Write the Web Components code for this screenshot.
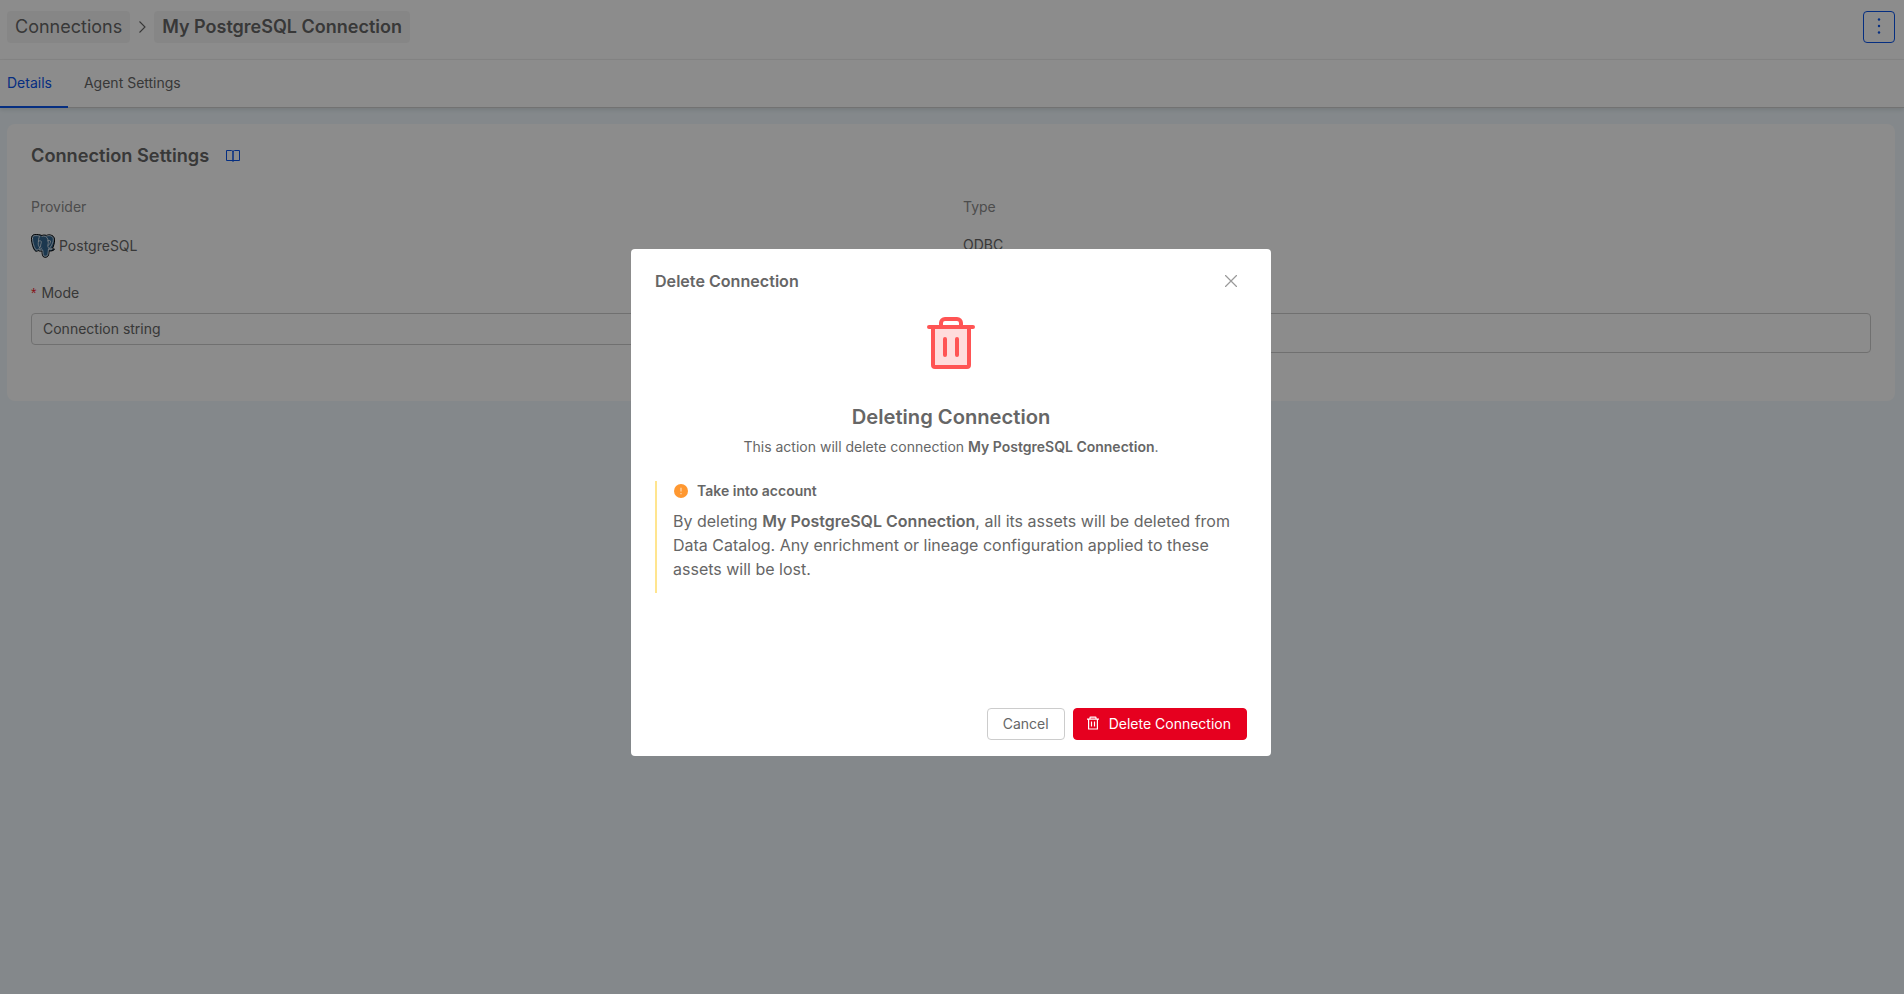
<!DOCTYPE html>
<html lang="en">
<head>
<meta charset="utf-8">
<title>My PostgreSQL Connection</title>
<style>
html,body{margin:0;height:100%;overflow:hidden}
body{font:14px/22px Inter,sans-serif;color:#666;background:#f0f8fd;--blue:#0a54eb}
</style>
</head>
<body>
<connection-page></connection-page>
<script>
const define=(name,html)=>customElements.define(name,class extends HTMLElement{
  constructor(){super();this.attachShadow({mode:'open'}).innerHTML=html;}
});

define('crumb-chip',`<style>
:host{display:flex;align-items:center;box-sizing:border-box;height:32px;padding:0 8px;border-radius:4px;background:#f5f5f5;font-size:18px;line-height:26px;white-space:nowrap}
:host([current]){font-weight:600}
</style><slot></slot>`);

define('page-header',`<style>
:host{display:flex;align-items:center;box-sizing:border-box;height:60px;padding:0 9px 6px 7px;background:#fff;border-bottom:1px solid #f0f0f0}
.sep{width:24px;height:32px;display:block}
button{margin:0 0 0 auto;padding:0;width:32px;height:32px;border:1px solid var(--blue);border-radius:4px;background:#fff;display:block}
button svg{display:block;fill:var(--blue)}
</style>
<crumb-chip>Connections</crumb-chip>
<svg class="sep" viewBox="0 0 24 32"><path d="M9.500 10.500 15 16l-5.500 5.500" fill="none" stroke="#666" stroke-width="1.100"/></svg>
<crumb-chip current>My PostgreSQL Connection</crumb-chip>
<button aria-label="More"><svg width="30" height="30" viewBox="0 0 30 30"><circle cx="15" cy="7.500" r="1.200"/><circle cx="15" cy="14" r="1.200"/><circle cx="15" cy="20.500" r="1.200"/></svg></button>`);

define('tab-item',`<style>
:host{display:flex;align-items:center;box-sizing:border-box;height:48px;padding:0 16px;color:#666;border-bottom:2px solid transparent}
:host([active]){color:var(--blue);border-color:var(--blue);padding-left:7px}
</style><slot></slot>`);

define('tab-bar',`<style>
:host{display:flex;height:47px;background:#fff;border-bottom:1px solid #d0d0d0;box-shadow:0 2px 4px rgba(0,0,0,.1);position:relative}
</style><slot></slot>`);

define('postgres-logo',`<style>:host{display:block;width:24px;height:24px}svg{display:block}</style>
<svg width="24" height="24" viewBox="0 0 24 24">
<path d="M3.800.6C1.300.7.300 2.700.5 5.400c.2 3.600 1.500 8.600 3.200 10.900 1 1.300 2.300 1.200 3.400.1 1 .9 2.500.8 3.800.5.300 1.800.1 4.500 1.300 5.700 1.300 1.300 4.300.8 5.200-1 .6-1.500.5-3.300.7-4.700 1.900.3 4.200-.1 5.300-1.500.4-.7-1-.5-2.200-.5 1.200-2.200 2.500-6 2.400-9 0-2.600-1.600-4.600-4.500-5-1.600-.2-2.700.2-3.700.5C14 1 12.400.8 10.900 1.500 8.800.6 6.200.4 3.800.6z" fill="#336791" stroke="#050505" stroke-width="1"/>
<g fill="none" stroke="#fff" stroke-width=".7" stroke-linecap="round">
<path d="M1.500 4.500c0-1.900.9-2.900 2.500-2.900 1.700-.1 3.400 0 4.900.7C7.200 4 7.600 6.700 7.300 8.600c-.3 2 .1 3.900 1.500 4.800-1.300 2.300-2.500 3.300-3.600 2.500C3.300 14 1.500 8.400 1.500 4.500z"/>
<path d="M7.500 7.200c1-.7 2.300-.6 2.700.2.500 1.500-.8 3.100-.6 4.700.1 1.500-1 1.700-1.500 1M11 2.300c2.400-.9 4.800.1 5.800 2.900.6 2 .6 4 .1 5.700-.4 1.400.1 2.300.7 3M10.900 14c-.9 1-2 1.200-2.700 1.800 1 .6 2.200.3 3.400.1.700 1.700 0 4.500 1.200 5.900 1.100 1 3.300.4 4-.8.500-1.700.3-4 .6-5.900M15.900 1.900c3.200-1 6.300.3 6.400 3.400.1 2.700-1.500 6-3.400 8.500M16.500 6.800c1-.6 2.400-.4 3 .1.200 2-.9 3.500-2.100 4.400M17.900 14.300c1.200.4 2.500.6 3.600.4-.8 1-2.200 1.100-3.700.8"/>
</g></svg>`);

define('field-item',`<style>
:host{display:block;min-width:0}
.label{height:22px;margin-bottom:16px;color:#8c8c8c}
.value{display:flex;align-items:center;min-height:22px;gap:4px}
</style><div class="label"><slot name="label"></slot></div><div class="value"><slot></slot></div>`);

define('select-field',`<style>
:host{display:block;min-width:0}
.label{display:flex;gap:5px;height:22px;margin-bottom:9px}
.label i{font:14px/22px "Liberation Sans",sans-serif;color:#f5222d}
.box{display:flex;align-items:center;box-sizing:border-box;height:32px;padding:0 11px;border:1px solid #ccc;border-radius:4px}
:host([tall]) .box{height:40px}
:host([tall]) i{display:none}
</style><div class="label"><i>*</i><slot name="label"></slot></div><div class="box"><slot></slot></div>`);

define('settings-card',`<style>
:host{display:block;box-sizing:border-box;height:277px;margin:16px 9px 0 7px;padding:19px 24px;background:#fff;border-radius:8px}
h2{display:flex;align-items:center;gap:17px;height:26px;margin:0 0 27px;font-size:18.200px;line-height:26px;font-weight:600}
h2 span{margin-bottom:2px}
h2 svg{stroke:var(--blue)}
.grid{display:grid;grid-template-columns:1fr 1fr;column-gap:24px;row-gap:24px}
</style>
<h2><span>Connection Settings</span><svg width="14" height="12" viewBox="0 0 14 12" fill="none"><path d="M7 11V2Q7 .5 5.500.5H.5v10H7h6.500V.5h-5Q7 .5 7 2"/><path d="M7 1.500v10.500"/></svg></h2>
<div class="grid">
<field-item><span slot="label">Provider</span><postgres-logo></postgres-logo><span>PostgreSQL</span></field-item>
<field-item><span slot="label">Type</span><span>ODBC</span></field-item>
<select-field><span slot="label">Mode</span>Connection string</select-field>
<select-field tall></select-field>
</div>`);

define('trash-icon',`<style>:host{display:block;width:48px;height:52px}svg{display:block}</style>
<svg width="48" height="52" viewBox="0 0 48 52" fill="none" stroke="#ff5454" stroke-width="4" stroke-linecap="round" stroke-linejoin="round"><path d="M6 10h36v38a2 2 0 0 1-2 2H8a2 2 0 0 1-2-2z" fill="#ffdcdc"/><path d="M2 10h44M14 9V6a4 4 0 0 1 4-4h12a4 4 0 0 1 4 4v3M18 22v16M30 22v16"/></svg>`);

define('notice-box',`<style>
:host{display:block;box-sizing:border-box;height:112px;border-left:2px solid #ffe58f;padding:0 0 0 16px}
.head{display:flex;align-items:center;gap:9px;height:20px;padding-left:1px;font-weight:600}
.text{margin-top:8px;font-size:16px;line-height:24px}
svg{display:block}
</style>
<div class="head"><svg width="14" height="14" viewBox="0 0 14 14"><circle cx="7" cy="7" r="7" fill="#ff9831"/><path d="M7 3.800v3.800M7 9v1.200" stroke="#ffe0c0" stroke-width="1.100"/></svg><slot name="title"></slot></div>
<div class="text"><slot></slot></div>`);

define('action-button',`<style>
:host{display:block}
button{display:flex;align-items:center;justify-content:center;gap:10px;box-sizing:border-box;height:32px;margin:0;padding:0 15px;border:1px solid #ccc;border-radius:4px;background:#fff;font:inherit;color:#666;white-space:nowrap}
:host([danger]) button{background:#e6001f;border-color:#e6001f;color:#fff;padding:0 15px 0 13px}
</style><button><slot name="icon"></slot><slot></slot></button>`);

define('confirm-dialog',`<style>
:host{position:absolute;inset:0;display:flex;justify-content:center;align-items:flex-start;background:rgba(0,0,0,.45);padding:249px 2px 0 0;box-sizing:border-box}
section{display:flex;flex-direction:column;box-sizing:border-box;width:640px;height:507px;border-radius:4px;background:#fff;padding:20px 24px 16px}
header{display:flex;justify-content:space-between;align-items:center;height:24px;font-size:16.100px;font-weight:600;padding-right:10px}
.main{display:flex;flex-direction:column;align-items:center;padding-top:24px}
h3{margin:33px 0 0;font-size:20.160px;line-height:30px;font-weight:600}
p{margin:4px 0 23px}
b{font-weight:600}
notice-box{align-self:stretch}
footer{display:flex;justify-content:flex-end;gap:8px;margin-top:auto}
svg{display:block}
</style>
<section>
<header><span>Delete Connection</span><svg width="12" height="12" viewBox="0 0 12 12"><path d="M.5.5l11 11M11.500.5l-11 11" stroke="#999" stroke-width="1.200" stroke-linecap="round"/></svg></header>
<div class="main">
<trash-icon></trash-icon>
<h3>Deleting Connection</h3>
<p>This action will delete connection <b>My PostgreSQL Connection</b>.</p>
<notice-box><span slot="title">Take into account</span>By deleting <b>My PostgreSQL Connection</b>, all its assets will be deleted from Data Catalog. Any enrichment or lineage configuration applied to these assets will be lost.</notice-box>
</div>
<footer><action-button>Cancel</action-button><action-button danger><svg slot="icon" width="12" height="14" viewBox="0 0 12 14" fill="none" stroke="#fff" stroke-width="1.200" style="margin-bottom:2px"><path d="M0 3.100h12M3 3V1.700Q3 1.100 3.600 1.100h4.800q.6 0 .6.600V3M1.600 3v10h8.800V3M4.500 5.500v5M7.500 5.500v5"/></svg>Delete Connection</action-button></footer>
</section>`);

define('connection-page',`<style>
:host{display:block;height:100%;position:relative;overflow:hidden;background:#f0f8fd}
</style>
<page-header></page-header>
<tab-bar><tab-item active>Details</tab-item><tab-item>Agent Settings</tab-item></tab-bar>
<settings-card></settings-card>
<confirm-dialog></confirm-dialog>`);
</script>
</body>
</html>
